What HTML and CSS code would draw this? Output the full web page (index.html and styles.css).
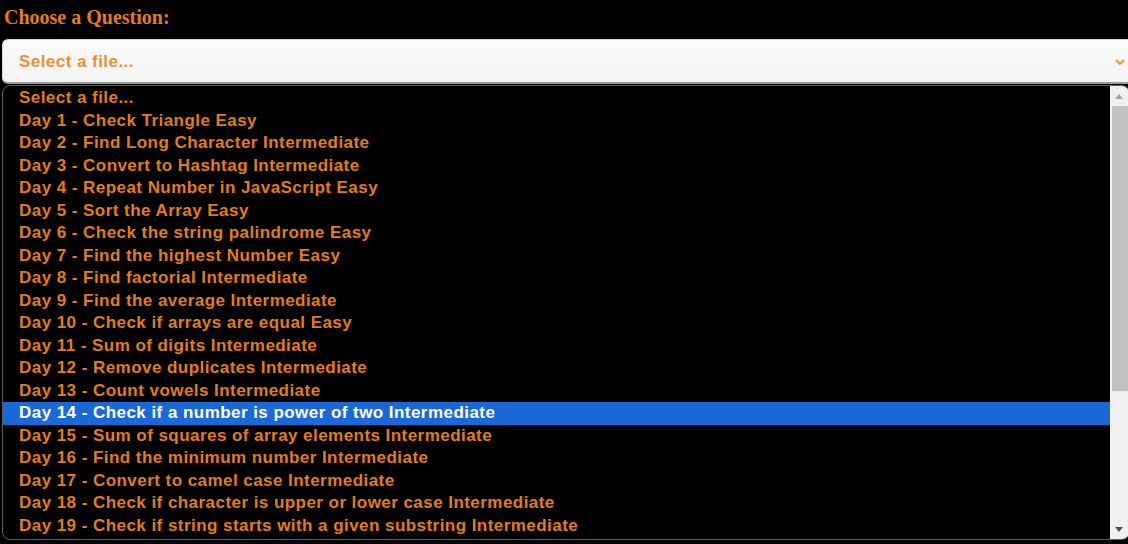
FILE: index.html
```html
<!DOCTYPE html>
<html>
<head>
<meta charset="utf-8">
<link rel="stylesheet" href="styles.css">
</head>
<body>
<h3 class="title">Choose a Question:</h3>
<div class="select">
  <span class="select-text">Select a file...</span>
  <svg class="chevron" width="10" height="6" viewBox="0 0 10 6"><polyline points="1,1 5,5 9,1" fill="none" stroke="#e8902e" stroke-width="1.8"/></svg>
</div>
<div class="dropdown">
  <ul class="list">
    <li>Select a file...</li>
    <li>Day 1 - Check Triangle Easy</li>
    <li>Day 2 - Find Long Character Intermediate</li>
    <li>Day 3 - Convert to Hashtag Intermediate</li>
    <li>Day 4 - Repeat Number in JavaScript Easy</li>
    <li>Day 5 - Sort the Array Easy</li>
    <li>Day 6 - Check the string palindrome Easy</li>
    <li>Day 7 - Find the highest Number Easy</li>
    <li>Day 8 - Find factorial Intermediate</li>
    <li>Day 9 - Find the average Intermediate</li>
    <li>Day 10 - Check if arrays are equal Easy</li>
    <li>Day 11 - Sum of digits Intermediate</li>
    <li>Day 12 - Remove duplicates Intermediate</li>
    <li>Day 13 - Count vowels Intermediate</li>
    <li class="active">Day 14 - Check if a number is power of two Intermediate</li>
    <li>Day 15 - Sum of squares of array elements Intermediate</li>
    <li>Day 16 - Find the minimum number Intermediate</li>
    <li>Day 17 - Convert to camel case Intermediate</li>
    <li>Day 18 - Check if character is upper or lower case Intermediate</li>
    <li>Day 19 - Check if string starts with a given substring Intermediate</li>
  </ul>
  <div class="scrollbar">
    <div class="arrow up"></div>
    <div class="track"><div class="thumb"></div></div>
    <div class="arrow down"></div>
  </div>
</div>
</body>
</html>
```
FILE: styles.css
```css
html, body {
  margin: 0;
  padding: 0;
  background: #000;
  width: 1128px;
  height: 544px;
  overflow: hidden;
}
body {
  font-family: "Liberation Sans", Arial, sans-serif;
}
.title {
  margin: 0;
  padding: 6px 0 0 4px;
  height: 26px;
  box-sizing: border-box;
  font-family: "Liberation Serif", "Times New Roman", serif;
  font-size: 20px;
  line-height: 22px;
  font-weight: bold;
  color: #e07d1c;
}
.select {
  margin: 13px 0 0 2px;
  width: 1140px;
  height: 45px;
  box-sizing: border-box;
  border: 1px solid #d6d6d6;
  border-bottom: 2px solid #9a9a9a;
  border-radius: 6px;
  background: linear-gradient(#fbfbfb, #f3f3f3);
  display: flex;
  align-items: center;
  position: relative;
  padding: 2px 0 0 16px;
}
.select-text {
  font-size: 17px;
  letter-spacing: 0.45px;
  font-weight: bold;
  color: #e8903a;
}
.chevron {
  position: absolute;
  left: 1112px;
  top: 19px;
}
.dropdown {
  margin: 1px 0 0 2px;
  width: 1128px;
  height: 455px;
  box-sizing: border-box;
  border: 1px solid #5c5c5c;
  border-radius: 8px;
  background: #000;
  display: flex;
  overflow: hidden;
}
.list {
  list-style: none;
  margin: 0;
  padding: 1px 0 0 0;
  flex: 1;
}
.list li {
  height: 22.5px;
  line-height: 22.5px;
  padding-left: 16px;
  font-size: 17px;
  letter-spacing: 0.45px;
  font-weight: bold;
  color: #e27d17;
  white-space: nowrap;
}
.list li.active {
  background: #1a69d6;
  color: #fff;
}
.scrollbar {
  width: 18px;
  background: #f0f0f0;
  display: flex;
  flex-direction: column;
  margin-right: 1px;
}
.arrow {
  height: 20px;
  display: flex;
  align-items: center;
  justify-content: center;
}
.arrow::before {
  content: "";
  width: 0;
  height: 0;
  border-left: 4.5px solid transparent;
  border-right: 4.5px solid transparent;
}
.arrow.up::before {
  border-bottom: 5px solid #a3a3a3;
}
.arrow.down::before {
  border-top: 5px solid #505050;
}
.track {
  flex: 1;
  padding: 0 0 0 2px;
}
.thumb {
  height: 285px;
  background: #c1c1c1;
}
```
